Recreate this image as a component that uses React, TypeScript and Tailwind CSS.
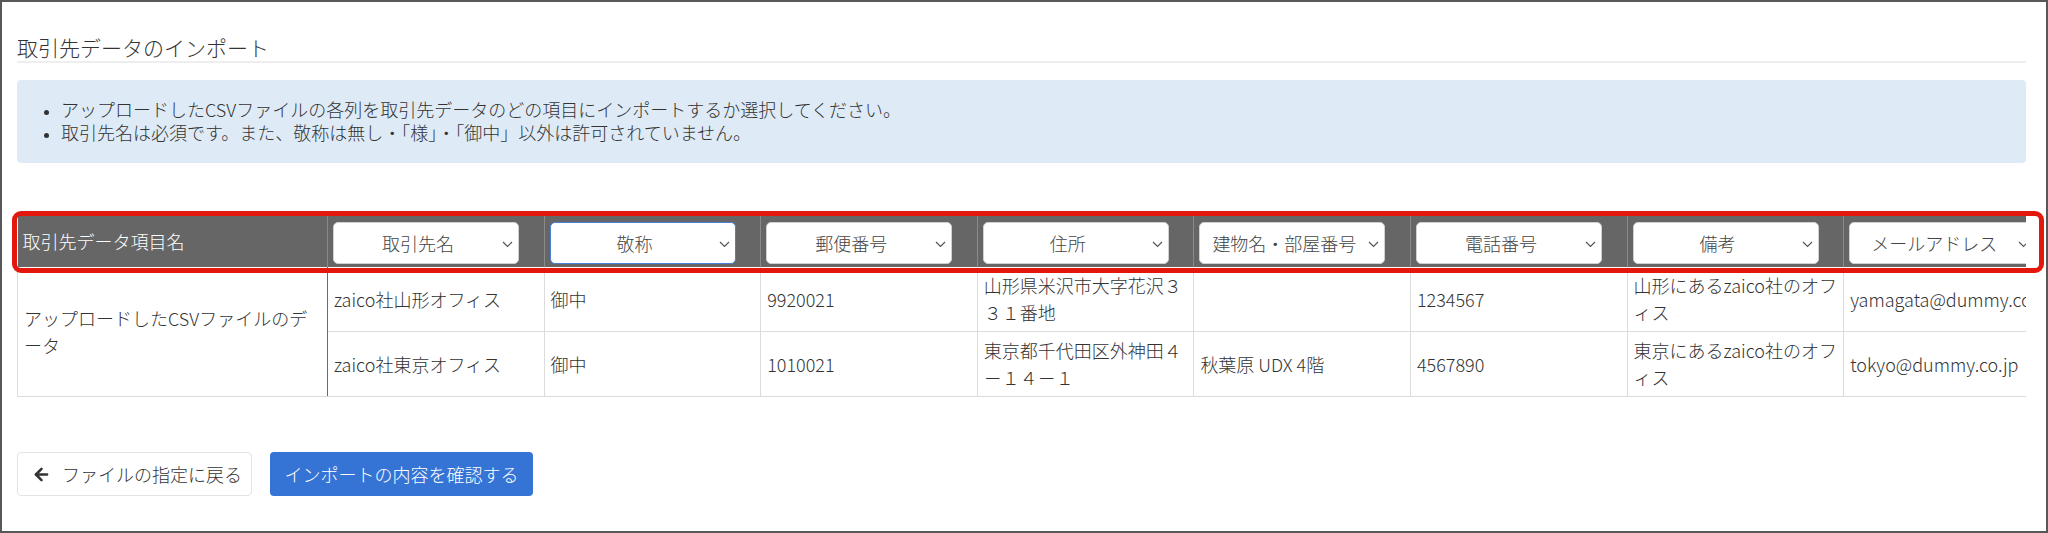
import { ArrowLeft } from 'lucide-react';

const columns = ['取引先名', '敬称', '郵便番号', '住所', '建物名・部屋番号', '電話番号', '備考', 'メールアドレス'];

const rows = [
  ['zaico社山形オフィス', '御中', '9920021', '山形県米沢市大字花沢３３１番地', '', '1234567', '山形にあるzaico社のオフィス', 'yamagata@dummy.co.jp'],
  ['zaico社東京オフィス', '御中', '1010021', '東京都千代田区外神田４－１４－１', '秋葉原 UDX 4階', '4567890', '東京にあるzaico社のオフィス', 'tokyo@dummy.co.jp'],
];

function ColumnSelect({ label, focused }: { label: string; focused?: boolean }) {
  return (
    <div
      className={
        focused
          ? 'relative flex h-[42px] w-[186px] items-center justify-center rounded-[5px] border-[1.5px] border-[#4c80d6] bg-white pl-[8px] pr-[24px] text-[#444]'
          : 'relative flex h-[42px] w-[186px] items-center justify-center rounded-[5px] border border-[#d0d0d0] bg-white pl-[8px] pr-[24px] text-[#444]'
      }
    >
      <span className="whitespace-nowrap">{label}</span>
      {/* thin chevron like the native select arrow */}
      <svg className="absolute right-[5px] top-[18px]" width="11" height="7" viewBox="0 0 11 7" fill="none">
        <polyline points="1,1 5.5,5.5 10,1" stroke="#555" strokeWidth="1.2" />
      </svg>
    </div>
  );
}

export default function App() {
  return (
    <div className="relative h-[533px] w-[2048px] overflow-hidden border-2 border-[#585858] bg-white font-['Noto_Sans_CJK_JP','Noto_Sans',sans-serif] text-[18px] font-light text-[#333]">
      <div className="pl-[15px] pr-[20px] pt-[31px]">
        {/* Page title */}
        <h1 className="border-b-2 border-[#eeeeee] text-[21px] leading-[28px] font-light">取引先データのインポート</h1>

        {/* Notes */}
        <div className="mt-[17px] rounded-[4px] bg-[#deebf7] pt-[18px] pb-[19px]">
          <ul className="list-disc pl-[44px] leading-[23px] marker:text-[14px]">
            <li>アップロードしたCSVファイルの各列を取引先データのどの項目にインポートするか選択してください。</li>
            <li>取引先名は必須です。また、敬称は無し・「様」・「御中」以外は許可されていません。</li>
          </ul>
        </div>

        {/* Column mapping table */}
        <div className="mt-[53px] overflow-hidden">
          <table className="w-[2043px] table-fixed border-collapse">
            <colgroup>
              <col className="w-[310px]" />
              {columns.map((c) => (
                <col key={c} className="w-[216.6px]" />
              ))}
            </colgroup>
            <thead>
              <tr className="bg-[#666666]">
                <th className="h-[51px] border-r border-[#8a8a8a] pl-[5px] text-left font-light text-white">取引先データ項目名</th>
                {columns.map((c, i) => (
                  <th key={c} className="border-r border-[#8a8a8a] pl-[5px] pt-[6px] pb-[3px] text-left font-light">
                    <ColumnSelect label={c} focused={i === 1} />
                  </th>
                ))}
              </tr>
            </thead>
            <tbody>
              {rows.map((row, r) => (
                <tr key={r}>
                  {r === 0 && (
                    <td rowSpan={2} className="border-b border-l border-r border-b-[#dcdcdc] border-l-[#dcdcdc] border-r-[#6b6b6b] px-[6px] align-middle leading-[27px]">
                      アップロードしたCSVファイルのデータ
                    </td>
                  )}
                  {row.map((cell, i) => (
                    <td key={i} className="h-[64px] border-b border-r border-[#dcdcdc] px-[6px] py-[5px] align-middle leading-[27px]">
                      {cell}
                    </td>
                  ))}
                </tr>
              ))}
            </tbody>
          </table>
        </div>

        {/* Actions */}
        <div className="mt-[55px] flex gap-[18px]">
          <button className="flex h-[44px] w-[235px] items-center gap-[11px] rounded-[4px] border border-[#e3e3e3] bg-white pl-[14px] text-[#333]">
            <ArrowLeft size={19} strokeWidth={3.2} />
            <span>ファイルの指定に戻る</span>
          </button>
          <button className="flex h-[44px] w-[263px] items-center justify-center rounded-[4px] bg-[#3574d5] text-white">
            インポートの内容を確認する
          </button>
        </div>
      </div>

      {/* red highlight drawn over the header row */}
      <div className="pointer-events-none absolute left-[10px] top-[209px] h-[62px] w-[2032px] rounded-[9px] border-[5px] border-[#e3170b]" />
    </div>
  );
}
